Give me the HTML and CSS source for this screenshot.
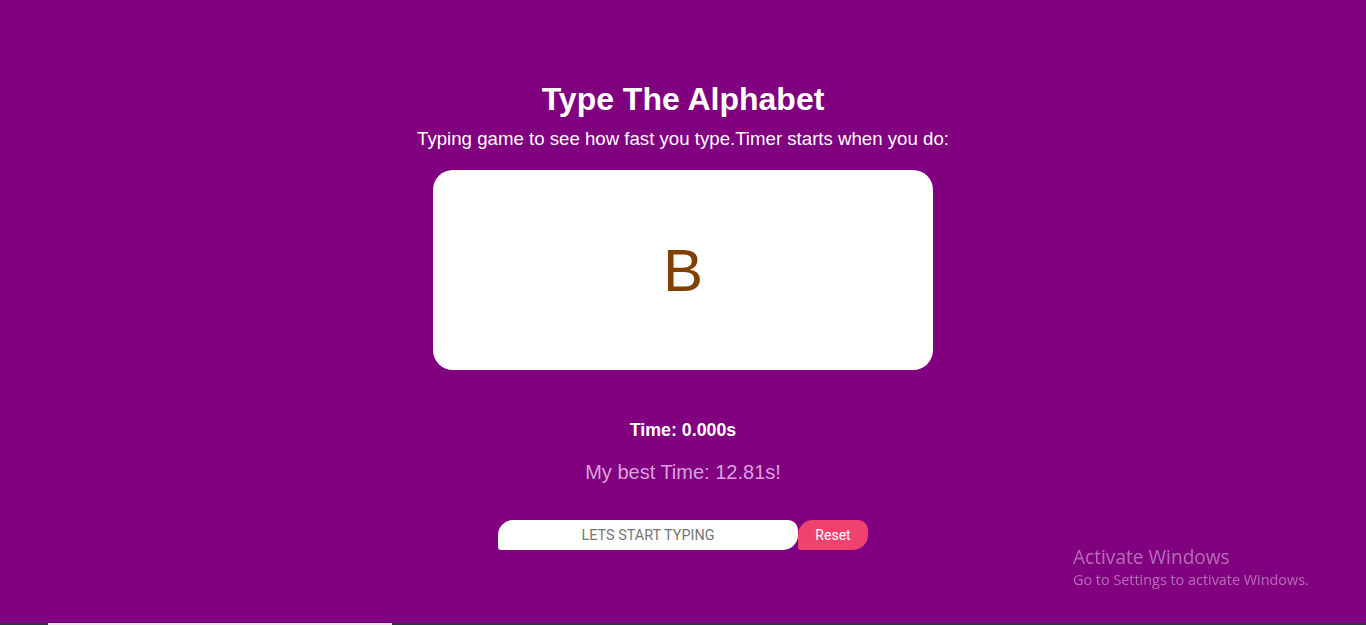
FILE: index.html
```html
<!DOCTYPE html>
<html lang="en">
<head>
<meta charset="utf-8">
<title>Type The Alphabet</title>
<link rel="stylesheet" href="styles.css">
</head>
<body>
<main class="game">
  <h1 class="title">Type The Alphabet</h1>
  <p class="subtitle">Typing game to see how fast you type.Timer starts when you do:</p>
  <div class="card"><span class="letter">B</span></div>
  <p class="time">Time: 0.000s</p>
  <p class="best">My best Time: 12.81s!</p>
  <div class="controls">
    <input class="typing" type="text" placeholder="LETS START TYPING">
    <button class="reset" type="button">Reset</button>
  </div>
</main>
<div class="watermark">
  <div class="wm-title">Activate Windows</div>
  <div class="wm-sub">Go to Settings to activate Windows.</div>
</div>
<div class="taskbar"><div class="taskbar-item"></div></div>
</body>
</html>
```

FILE: styles.css
```css
html, body {
  margin: 0;
  padding: 0;
  height: 100%;
}
body {
  background: #800080;
  font-family: "Liberation Sans", Arial, sans-serif;
  color: #fff;
  overflow: hidden;
}
.game {
  display: flex;
  flex-direction: column;
  align-items: center;
  padding-top: 81px;
}
.title {
  margin: 0;
  font-size: 32px;
  line-height: 37px;
  font-weight: bold;
}
.subtitle {
  margin: 9px 0 0;
  font-size: 18.65px;
  line-height: 23px;
}
.card {
  margin-top: 20px;
  width: 500px;
  height: 200px;
  background: #fff;
  border-radius: 20px;
  display: flex;
  align-items: center;
  justify-content: center;
}
.letter {
  color: #804000;
  font-size: 60px;
  line-height: 1;
  margin-top: 2px;
}
.time {
  margin: 50px 0 0;
  font-size: 17.8px;
  line-height: 21px;
  font-weight: bold;
}
.best {
  margin: 20px 0 0;
  font-size: 20px;
  line-height: 23px;
  color: #dda0dd;
}
.controls {
  margin-top: 36px;
  display: flex;
}
.typing {
  box-sizing: border-box;
  width: 300px;
  height: 30px;
  border: none;
  outline: none;
  background: #fff;
  border-radius: 15px 10px 15px 3px;
  text-align: center;
  font-family: Roboto, "Liberation Sans", sans-serif;
  font-size: 14.4px;
  padding: 0 10px;
}
.typing::placeholder {
  color: #757575;
}
.reset {
  box-sizing: border-box;
  width: 70px;
  height: 30px;
  border: none;
  background: #f0426f;
  color: #fff;
  border-radius: 15px 10px 15px 3px;
  font-family: Roboto, "Liberation Sans", sans-serif;
  font-size: 14px;
  padding: 0;
}
.watermark {
  position: fixed;
  left: 1073px;
  top: 545px;
  color: rgba(255, 255, 255, 0.42);
  font-family: "Open Sans", "Noto Sans", sans-serif;
}
.wm-title {
  font-size: 19.1px;
  line-height: 25px;
}
.wm-sub {
  font-size: 14.4px;
  line-height: 20px;
}
.taskbar {
  position: fixed;
  left: 0;
  right: 0;
  bottom: 0;
  height: 2px;
  background: #25383f;
}
.taskbar-item {
  margin-left: 48px;
  width: 344px;
  height: 2px;
  background: #e6e6e6;
}
```
